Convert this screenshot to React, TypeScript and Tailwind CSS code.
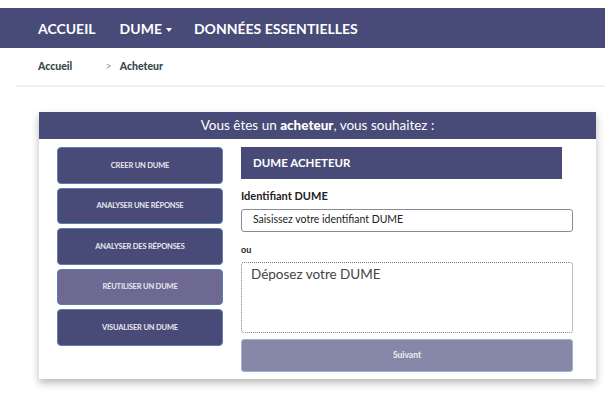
import React from "react";

const navy = "bg-[#484b77]";

function SideButton({ label, active }: { label: string; active?: boolean }) {
  return (
    <button
      className={`h-[36.5px] w-full rounded-[4px] border border-[#5d7fb0] text-[7.5px] font-bold uppercase tracking-tight text-[#e8e8f0] ${
        active ? "bg-[#6e6992]" : "bg-[#484b77]"
      }`}
    >
      {label}
    </button>
  );
}

export default function App() {
  return (
    <div className="min-h-[395px] w-[605px] bg-white font-['Lato',sans-serif] text-[#222]">
      <div className="h-[8px]" />
      <nav className={`flex h-[40px] items-center ${navy} pl-[38px] text-[14px] font-bold text-white`}>
        <span>ACCUEIL</span>
        <span className="ml-[24px] flex items-center gap-[4px]">
          DUME
          <span className="mt-[3px] h-0 w-0 border-l-[3.5px] border-r-[3.5px] border-t-[4px] border-l-transparent border-r-transparent border-t-white" />
        </span>
        <span className="ml-[22px]">DONNÉES ESSENTIELLES</span>
      </nav>
      <div className="ml-[16px] flex h-[39px] items-center border-b-2 border-[#eeeeee] pl-[22px] text-[10.5px] font-black text-[#36484a]">
        <span>Accueil</span>
        <span className="ml-[33px] text-[11px] font-normal text-[#8aa0c8]">&gt;</span>
        <span className="ml-[8px]">Acheteur</span>
      </div>
      <div className="h-[25px]" />
      <div className="ml-[39px] w-[557px] bg-white shadow-[0_4px_8px_rgba(0,0,0,0.28)]">
        <div className={`flex h-[27px] items-center justify-center ${navy} text-[13.5px] text-white`}>
          <span>
            Vous êtes un <b className="font-black">acheteur</b>, vous souhaitez :
          </span>
        </div>
        <div className="flex gap-[18px] pb-[7px] pl-[18px] pr-[23px] pt-[8px]">
          <div className="flex w-[166px] flex-col gap-[4px]">
            <SideButton label="Creer un DUME" />
            <SideButton label="Analyser une réponse" />
            <SideButton label="Analyser des réponses" />
            <SideButton label="Réutiliser un DUME" active />
            <SideButton label="Visualiser un DUME" />
          </div>
          <div className="flex flex-1 flex-col">
            <div className={`flex h-[32px] w-[321px] items-center ${navy} pl-[12px] text-[11.5px] font-bold text-white`}>
              DUME ACHETEUR
            </div>
            <div className="mt-[9px] text-[11px] font-bold text-[#222]">Identifiant DUME</div>
            <div className="mt-[4px] flex h-[23px] items-center rounded-[3px] border border-[#8a8a99] pl-[11px] text-[10.5px] text-[#222]">
              Saisissez votre identifiant DUME
            </div>
            <div className="mt-[11px] text-[9px] font-bold text-[#222]">ou</div>
            <div className="mt-[6px] h-[71px] rounded-[3px] border border-dotted border-[#7a7a90] pl-[9px] pt-[1px] text-[13.5px] text-[#444]">
              Déposez votre DUME
            </div>
            <div className="mt-[6px] flex h-[33px] items-center justify-center rounded-[3px] border border-[#9fb3d6] bg-[#8788a8] text-[8.5px] font-bold text-[#eeeef4]">
              Suivant
            </div>
          </div>
        </div>
      </div>
    </div>
  );
}
